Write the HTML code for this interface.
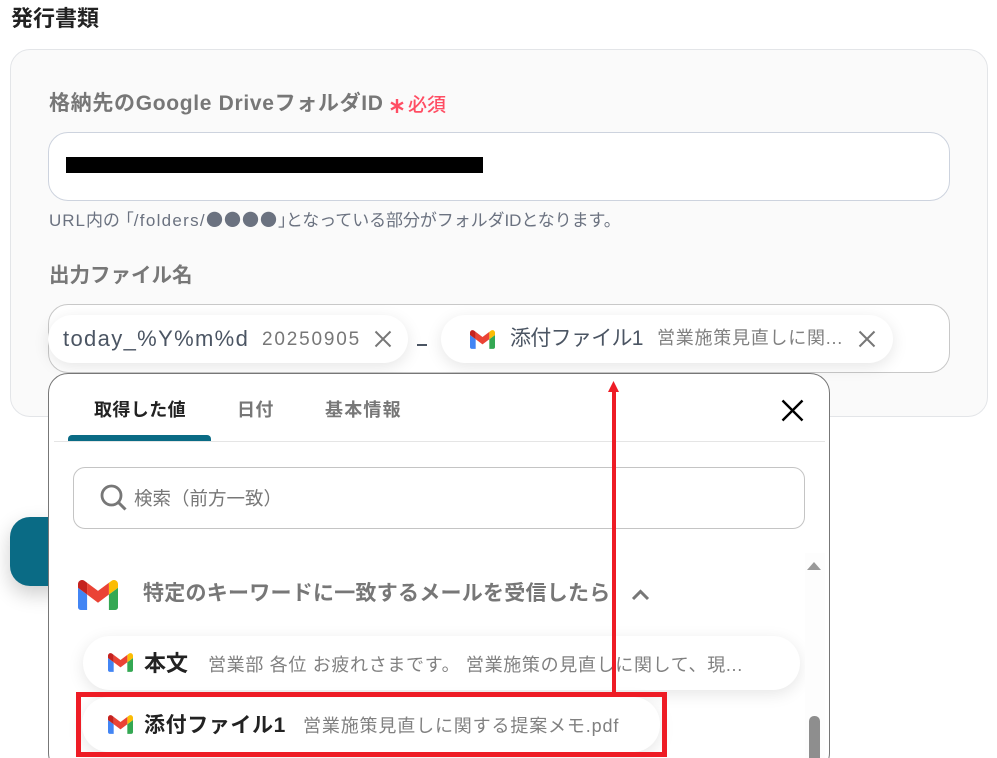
<!DOCTYPE html>
<html lang="ja"><head><meta charset="utf-8">
<style>
html,body{margin:0;padding:0;background:#fff}
#p{position:relative;width:997px;height:758px;overflow:hidden;background:#fff;font-family:"Liberation Sans","Noto Sans CJK JP",sans-serif}
#p div,#p span,#p svg{position:absolute;box-sizing:border-box}
.t{white-space:nowrap;line-height:1}
.b{font-weight:700}
i{font-style:normal}
</style></head><body>
<div id="p">
<svg width="0" height="0" style="left:0;top:0"><symbol id="g" viewBox="52 42 88 66"><path fill="#4285f4" d="M58 108h14V74L52 59v43c0 3.32 2.69 6 6 6"/><path fill="#34a853" d="M120 108h14c3.32 0 6-2.69 6-6V59l-20 15"/><path fill="#fbbc04" d="M120 48v26l20-15v-8c0-7.42-8.47-11.65-14.4-7.2"/><path fill="#ea4335" d="M72 74V48l24 18 24-18v26L96 92"/><path fill="#c5221f" d="M52 51v8l20 15V48l-5.6-4.2c-5.94-4.45-14.4-.22-14.4 7.2"/></symbol></svg>

<span class="t b" style="left:11px;top:8px;font-size:22px;color:#222">発行書類</span>

<div style="left:10px;top:49px;width:978px;height:368px;background:#fafafa;border:1px solid #e3e5e8;border-radius:20px"></div>

<span class="t b" style="left:49px;top:93px;font-size:21px;letter-spacing:.68px;color:#777">格納先のGoogle DriveフォルダID</span>
<svg style="left:389px;top:98px" width="16" height="16" viewBox="0 0 16 16"><path d="M8 1v14M2 4.5l12 7M14 4.5l-12 7" stroke="#ff4d63" stroke-width="2.4" fill="none"/></svg>
<span class="t" style="left:408px;top:96px;font-size:19px;color:#ff4d63;font-weight:500">必須</span>

<div style="left:48px;top:132px;width:902px;height:69px;background:#fff;border:1px solid #cdd3de;border-radius:20px"></div>
<div style="left:66px;top:157px;width:417px;height:16px;background:#000"></div>

<span class="t" style="left:49px;top:210px;font-size:17px;letter-spacing:-.08px;color:#6b7280"><i style="letter-spacing:1px">URL</i>内の<i style="margin-left:-3px">「</i><i style="letter-spacing:1.3px">/folders/</i><i style="font-family:'Noto Sans CJK JP',sans-serif;letter-spacing:1px">●●●●</i><i style="margin-right:-9px">」</i>となっている部分がフォルダIDとなります。</span>

<span class="t b" style="left:49px;top:266px;font-size:20.5px;color:#777">出力ファイル名</span>

<div style="left:48px;top:304px;width:902px;height:69px;background:#fff;border:1px solid #c8c8c8;border-radius:20px"></div>

<div style="left:48px;top:315px;width:360px;height:48px;background:#fff;border-radius:24px;box-shadow:0 4px 16px rgba(0,0,0,.1)"></div>
<span class="t" style="left:63px;top:328px;font-size:22px;letter-spacing:1.35px;color:#4b5563">today_%Y%m%d</span>
<span class="t" style="left:262px;top:330px;font-size:19px;letter-spacing:1.8px;color:#777">20250905</span>
<svg style="left:374px;top:330px" width="18" height="18" viewBox="0 0 18 18"><path d="M1.5 1.5l15 15M16.5 1.5l-15 15" stroke="#777" stroke-width="2" fill="none"/></svg>
<div style="left:417px;top:344px;width:10px;height:2px;background:#4b5563"></div>

<div style="left:441px;top:315px;width:452px;height:48px;background:#fff;border-radius:24px;box-shadow:0 4px 16px rgba(0,0,0,.1)"></div>
<svg style="left:470px;top:330px" width="25" height="19"><use href="#g"/></svg>
<span class="t" style="left:510px;top:328px;font-size:21px;letter-spacing:-.7px;color:#4b5563">添付ファイル1</span>
<span class="t" style="left:657px;top:329px;font-size:18px;letter-spacing:.75px;color:#808080">営業施策見直しに関...</span>
<svg style="left:858px;top:330px" width="18" height="18" viewBox="0 0 18 18"><path d="M1.5 1.5l15 15M16.5 1.5l-15 15" stroke="#777" stroke-width="2" fill="none"/></svg>

<div style="left:10px;top:517px;width:60px;height:69px;background:#0a6b85;border-radius:20px;box-shadow:0 8px 20px rgba(0,0,0,.2)"></div>

<div style="left:48px;top:373px;width:782px;height:400px;background:#fff;border:1px solid #777;border-radius:20px"></div>
<span class="t b" style="left:94px;top:401px;font-size:18px;letter-spacing:.4px;color:#222">取得した値</span>
<span class="t b" style="left:237px;top:401px;font-size:18px;letter-spacing:.4px;color:#777">日付</span>
<span class="t b" style="left:325px;top:401px;font-size:18px;letter-spacing:1.2px;color:#777">基本情報</span>
<div style="left:54px;top:441px;width:771px;height:1px;background:#e5e5e5"></div>
<div style="left:68px;top:435px;width:143px;height:6px;background:#0a6b85;border-radius:4px 4px 0 0"></div>
<svg style="left:781px;top:399px" width="23" height="23" viewBox="0 0 23 23"><path d="M1.5 1.5l20 20M21.5 1.5l-20 20" stroke="#000" stroke-width="2.4" fill="none"/></svg>

<div style="left:73px;top:467px;width:732px;height:62px;background:#fff;border:1px solid #c4c4c4;border-radius:12px"></div>
<svg style="left:100px;top:484px" width="27" height="27" viewBox="0 0 27 27"><circle cx="11.5" cy="11.5" r="9.5" fill="none" stroke="#777" stroke-width="2.8"/><path d="M18.5 18.5l7 7" stroke="#777" stroke-width="3" fill="none"/></svg>
<span class="t" style="left:134px;top:490px;font-size:18.5px;color:#777">検索（前方一致）</span>

<svg style="left:78px;top:580px" width="40" height="30"><use href="#g"/></svg>
<span class="t b" style="left:143px;top:583px;font-size:21px;letter-spacing:.25px;color:#777">特定のキーワードに一致するメールを受信したら</span>
<svg style="left:631px;top:588px" width="19" height="14" viewBox="0 0 19 14"><path d="M2 11l7.5-7.5 7.5 7.5" stroke="#777" stroke-width="3" fill="none"/></svg>

<div style="left:83px;top:636px;width:717px;height:54px;background:#fff;border-radius:27px;box-shadow:0 4px 16px rgba(0,0,0,.1)"></div>
<svg style="left:108px;top:653px" width="25" height="19"><use href="#g"/></svg>
<span class="t b" style="left:144px;top:653px;font-size:22px;color:#222">本文</span>
<span class="t" style="left:208px;top:656px;font-size:18px;letter-spacing:.67px;color:#808080">営業部 各位 お疲れさまです。 営業施策の見直しに関して、現...</span>

<div style="left:82px;top:697px;width:578px;height:55px;background:#fff;border-radius:27px;box-shadow:0 4px 16px rgba(0,0,0,.1)"></div>
<svg style="left:108px;top:715px" width="25" height="19"><use href="#g"/></svg>
<span class="t b" style="left:144px;top:715px;font-size:21px;letter-spacing:.6px;color:#222">添付ファイル1</span>
<span class="t" style="left:303px;top:717px;font-size:18px;letter-spacing:.85px;color:#808080">営業施策見直しに関する提案メモ.pdf</span>

<div style="left:805px;top:553px;width:20px;height:205px;background:#fdfdfd"></div>
<svg style="left:807px;top:560px" width="14" height="10"><path d="M0 10L7 2l7 8z" fill="#999"/></svg>
<div style="left:809px;top:716px;width:11px;height:60px;background:#8e8e8e;border-radius:5px"></div>

<div style="left:612px;top:390px;width:4px;height:303px;background:#ee1c25"></div>
<svg style="left:608px;top:381px" width="11" height="11"><path d="M5.5 0L11 11H0z" fill="#ee1c25"/></svg>
<div style="left:76px;top:692px;width:591px;height:65px;border:5px solid #ee1c25"></div>
</div>
</body></html>
